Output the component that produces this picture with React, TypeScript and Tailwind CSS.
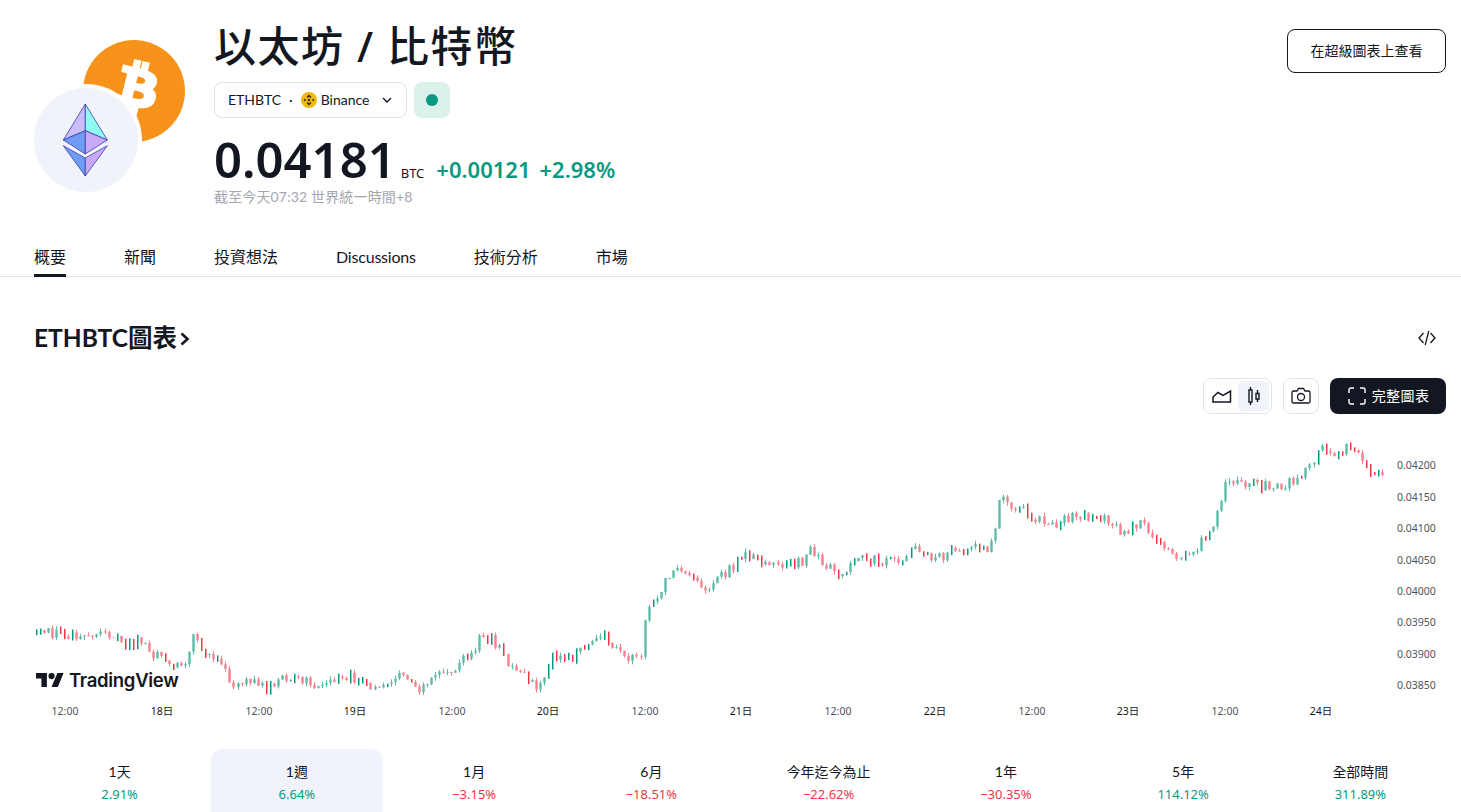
// close price path of the week as [x, y] in page pixels, read off the picture
const path: [number, number][] = [
  [35, 630], [40, 628], [45, 633], [60, 632], [75, 635], [95, 631], [110, 637], [125, 645], [140, 640],
  [155, 655], [165, 660], [180, 668], [186, 664], [193, 636], [205, 655], [220, 665], [232, 682], [245, 680],
  [265, 688], [280, 680], [305, 681], [310, 690], [325, 684], [350, 675], [365, 686], [385, 685], [400, 670],
  [420, 688], [440, 675], [470, 657], [480, 637], [492, 637], [505, 660], [520, 670], [535, 690], [545, 680],
  [553, 650], [560, 660], [575, 655], [605, 637], [620, 655], [640, 658], [645, 615], [655, 600], [670, 572],
  [680, 570], [705, 588], [730, 570], [745, 552], [775, 566], [805, 562], [809, 540], [820, 565], [840, 572],
  [860, 560], [900, 560], [918, 548], [935, 560], [960, 547], [990, 548], [1000, 500], [1020, 510], [1045, 525],
  [1075, 517], [1105, 520], [1120, 533], [1140, 525], [1160, 540], [1178, 562], [1195, 550], [1210, 530],
  [1225, 485], [1240, 482], [1260, 487], [1280, 485], [1300, 478], [1322, 445], [1327, 450], [1333, 458],
  [1345, 447], [1358, 452], [1365, 467], [1383, 478],
];

const yAt = (x: number) => {
  for (let i = 1; i < path.length; i++) {
    if (x <= path[i][0]) {
      const [x0, y0] = path[i - 1];
      const [x1, y1] = path[i];
      return y0 + ((x - x0) / (x1 - x0)) * (y1 - y0);
    }
  }
  return path[path.length - 1][1];
};

const rand = (n: number) => {
  const s = Math.sin(n * 127.1 + 11.7) * 43758.5453;
  return s - Math.floor(s);
};

const CHART_TOP = 425;
const NOISE = 11;

const candles = Array.from({ length: 335 }, (_, i) => {
  const x = 36 + i * 4.03;
  const close = yAt(x) + (rand(i) - 0.5) * NOISE;
  const open = yAt(x - 4.03) + (rand(i - 1) - 0.5) * NOISE;
  return {
    x: Math.round(x),
    top: Math.min(open, close) - rand(i + 500) * 3.5,
    bottom: Math.max(open, close) + rand(i + 900) * 3.5,
    bodyTop: Math.min(open, close),
    bodyH: Math.max(Math.abs(open - close), 1),
    up: close <= open,
    solid: rand(i + 1300) < 0.28,
  };
});

const prices = [
  ["0.04200", 465], ["0.04150", 497], ["0.04100", 528], ["0.04050", 560], ["0.04000", 591],
  ["0.03950", 622], ["0.03900", 654], ["0.03850", 685],
] as const;

const times = [
  ["12:00", 65], ["18日", 162], ["12:00", 259], ["19日", 355], ["12:00", 452], ["20日", 548], ["12:00", 645],
  ["21日", 741], ["12:00", 838], ["22日", 935], ["12:00", 1032], ["23日", 1128], ["12:00", 1225], ["24日", 1321],
] as const;

const periods = [
  { label: "1天", value: "2.91%", up: true },
  { label: "1週", value: "6.64%", up: true, active: true },
  { label: "1月", value: "−3.15%", up: false },
  { label: "6月", value: "−18.51%", up: false },
  { label: "今年迄今為止", value: "−22.62%", up: false },
  { label: "1年", value: "−30.35%", up: false },
  { label: "5年", value: "114.12%", up: true },
  { label: "全部時間", value: "311.89%", up: true },
];

const tabs = ["概要", "新聞", "投資想法", "Discussions", "技術分析", "市場"];

const CoinLogos = () => (
  <div className="relative h-[152px] w-[180px] shrink-0">
    <svg viewBox="0 0 102 102" className="absolute left-[49px] top-0 h-[102px] w-[102px]">
      <circle cx="51" cy="51" r="51" fill="#f7931a" />
      <g transform="translate(10.5 4.5) scale(2.68)">
        <path
          fill="#fff"
          stroke="#fff"
          strokeWidth="1"
          d="M23.189 14.02c.314-2.096-1.283-3.223-3.465-3.975l.708-2.84-1.728-.43-.69 2.765c-.454-.114-.92-.22-1.385-.326l.695-2.783L15.596 6l-.708 2.839c-.376-.086-.746-.17-1.104-.26l.002-.009-2.384-.595-.46 1.846s1.283.294 1.256.312c.7.175.826.638.805 1.006l-.806 3.235c.048.012.11.03.18.057l-.183-.045-1.13 4.532c-.086.212-.303.531-.793.41.018.025-1.256-.313-1.256-.313l-.858 1.978 2.25.561c.418.105.828.215 1.231.318l-.715 2.872 1.727.43.708-2.84c.472.127.93.245 1.378.357l-.706 2.828 1.728.43.715-2.866c2.948.558 5.164.333 6.097-2.333.752-2.146-.037-3.385-1.588-4.192 1.13-.26 1.98-1.003 2.207-2.538zm-3.95 5.538c-.533 2.147-4.148.986-5.32.695l.95-3.805c1.172.293 4.929.872 4.37 3.11zm.535-5.569c-.487 1.953-3.495.96-4.47.717l.86-3.45c.975.243 4.118.696 3.61 2.733z"
        />
      </g>
    </svg>
    <div className="absolute left-[-4px] top-[44px] h-[112px] w-[112px] rounded-full bg-white p-1">
      <div className="h-full w-full rounded-full bg-[#f0f3fa]">
        <svg viewBox="0 0 104 104" className="h-[104px] w-[104px]">
          <g stroke="#3c3ca8" strokeWidth="0.8" strokeLinejoin="round">
            <path d="M51.3 16 29.3 52 51.3 42.7Z" fill="#cabdf9" />
            <path d="M51.3 16 73.3 52 51.3 42.7Z" fill="#8ffcf0" />
            <path d="M29.3 52 51.3 42.7V66Z" fill="#6f9cf5" />
            <path d="M73.3 52 51.3 42.7V66Z" fill="#c9a8f5" />
            <path d="M29.3 57.7 51.3 70V88Z" fill="#6f9cf5" />
            <path d="M73.3 57.7 51.3 70V88Z" fill="#c9a8f5" />
          </g>
        </svg>
      </div>
    </div>
  </div>
);

const BinanceIcon = () => (
  <svg viewBox="0 0 16 16" className="h-4 w-4">
    <circle cx="8" cy="8" r="8" fill="#f0b90b" />
    <g fill="#2b2308">
      <path d="M8 2.6 10.400 5 9.400 6 8 4.600 6.600 6 5.600 5Z" />
      <path d="M8 13.400 10.400 11 9.400 10 8 11.400 6.600 10 5.600 11Z" />
      <path d="M2.600 8 3.800 6.800 5 8 3.800 9.200Z" />
      <path d="M13.400 8 12.200 6.800 11 8 12.200 9.200Z" />
      <path d="M8 6.500 9.500 8 8 9.500 6.500 8Z" />
    </g>
  </svg>
);

const Chart = () => (
  <svg width="1461" height="300" viewBox={`0 ${CHART_TOP} 1461 300`} className="block">
    {candles.map((c, i) =>
      c.solid ? (
        <rect
          key={i}
          x={c.x}
          y={c.top}
          width="1.5"
          height={c.bottom - c.top}
          fill={c.up ? "#089981" : "#f23645"}
        />
      ) : (
        <g key={i}>
          <rect
            x={c.x - 1}
            y={c.bodyTop}
            width="3"
            height={c.bodyH}
            fill={c.up ? "#8fd1c1" : "#fba5af"}
          />
          <rect
            x={c.x}
            y={c.top}
            width="1"
            height={c.bottom - c.top}
            fill={c.up ? "#5cbcaa" : "#f8808f"}
          />
        </g>
      ),
    )}
    {prices.map(([label, y]) => (
      <text key={label} x="1397" y={y + 4} fontSize="10.5" fill="#50535e" fontFamily="'Noto Sans', sans-serif">
        {label}
      </text>
    ))}
    {times.map(([label, x]) => (
      <text
        key={x}
        x={x}
        y="715"
        fontSize="10.5"
        textAnchor="middle"
        fill={label.includes("日") ? "#131722" : "#50535e"}
        fontFamily="'Noto Sans', 'Noto Sans CJK TC', sans-serif"
      >
        {label}
      </text>
    ))}
  </svg>
);

export default function App() {
  return (
    <div className="h-[812px] overflow-hidden bg-white font-['Lato','Noto_Sans_CJK_TC',sans-serif] text-[#131722]">
      <div className="flex justify-between pl-[34px] pr-[15px] pt-[18px]">
        <div className="flex">
          <div className="pt-[22px]">
            <CoinLogos />
          </div>
          <div>
            <h1 className="text-[42px] font-medium leading-[56px] tracking-[1.5px] font-['Noto_Sans','Noto_Sans_CJK_TC',sans-serif]">以太坊 / 比特幣</h1>
            <div className="mt-2 flex gap-[7px]">
              <div className="flex h-9 w-[193px] items-center rounded-lg border border-[#e0e3eb] pl-[13px] text-sm">
                <span>ETHBTC</span>
                <span className="mx-[8px]">·</span>
                <BinanceIcon />
                <span className="ml-1">Binance</span>
                <svg viewBox="0 0 12 12" className="ml-[11px] h-3 w-3" fill="none" stroke="#131722" strokeWidth="1.4">
                  <path d="M2 4 6 8 10 4" />
                </svg>
              </div>
              <div className="flex h-9 w-9 items-center justify-center rounded-lg bg-[#daf1ec]">
                <span className="h-3 w-3 rounded-full bg-[#089981]" />
              </div>
            </div>
            <div className="mt-[12px] flex items-baseline font-['Noto_Sans',sans-serif]">
              <span className="text-[49px] font-semibold leading-[58px]">0.04181</span>
              <span className="ml-[5px] text-[13px]">BTC</span>
              <span className="ml-[12px] text-[22px] font-semibold text-[#089981]">+0.00121</span>
              <span className="ml-[9px] text-[22px] font-semibold text-[#089981]">+2.98%</span>
            </div>
            <div className="-mt-px text-sm leading-5 tracking-[0.15px] text-[#a3a6af]">截至今天07:32 世界統一時間+8</div>
          </div>
        </div>
        <button className="mt-[11px] h-11 w-[159px] rounded-lg border border-[#131722] text-sm">在超級圖表上查看</button>
      </div>

      <div className="mt-[24px] flex gap-[58px] border-b border-[#e0e3eb] pl-[34px]">
        {tabs.map((t, i) => (
          <div
            key={t}
            className={`relative h-[45px] pt-[14px] text-base leading-6 text-[#131722] ${i === 3 ? "tracking-[-0.2px]" : ""}`}
          >
            {t}
            {i === 0 && <span className="absolute bottom-[-1px] left-0 h-[3px] w-full bg-[#131722]" />}
          </div>
        ))}
      </div>

      <div className="mt-[45px] flex items-center justify-between pl-[34px] pr-[24px]">
        <h2 className="flex items-center text-[24.5px] font-bold leading-8">
          ETHBTC圖表
          <svg viewBox="0 0 12 16" className="ml-[2px] mt-[2px] h-4 w-3" fill="none" stroke="#131722" strokeWidth="2.6">
            <path d="M2.5 2.5 8.5 8 2.5 13.5" />
          </svg>
        </h2>
        <svg viewBox="0 0 20 20" className="h-5 w-5" fill="none" stroke="#131722" strokeWidth="1.3">
          <path d="M6.5 5 2 10l4.5 5M13.5 5 18 10l-4.5 5M11.8 3 8.2 17" />
        </svg>
      </div>

      <div className="mt-[24px] flex justify-end gap-[11px] pr-[15px]">
        <div className="flex h-9 w-[69px] items-center rounded-lg border border-[#e0e3eb] p-[2px]">
          <div className="flex h-full w-[33px] items-center justify-center">
            <svg viewBox="0 0 20 14" className="h-[14px] w-5" fill="none" stroke="#131722" strokeWidth="1.5">
              <path d="M1 8 6 3.5l5 3 7.5-4.5V13H1Z" />
            </svg>
          </div>
          <div className="flex h-full w-[31px] items-center justify-center rounded-md bg-[#f0f3fa]">
            <svg viewBox="0 0 14 20" className="h-5 w-[14px]" fill="none" stroke="#131722" strokeWidth="1.4">
              <path d="M3.5 1v3M3.5 16v3M10.5 4v3.5M10.5 13v3M2 4h3v12H2ZM9 7.5h3V13H9Z" />
            </svg>
          </div>
        </div>
        <div className="flex h-9 w-9 items-center justify-center rounded-lg border border-[#e0e3eb]">
          <svg viewBox="0 0 20 18" className="h-[18px] w-5" fill="none" stroke="#131722" strokeWidth="1.3">
            <path d="M2.5 4H6l1.5-2.5h5L14 4h3.5A1.5 1.5 0 0 1 19 5.500v9a1.500 1.500 0 0 1-1.500 1.500h-15A1.500 1.500 0 0 1 1 14.500v-9A1.500 1.500 0 0 1 2.500 4Z" />
            <circle cx="10" cy="10" r="3.5" />
          </svg>
        </div>
        <button className="flex h-9 w-[116px] items-center justify-center gap-[6px] rounded-lg bg-[#131722] pl-px text-sm tracking-[0.4px] text-white">
          <svg viewBox="0 0 18 18" className="h-[18px] w-[18px]" fill="none" stroke="#fff" strokeWidth="1.4">
            <path d="M1 6V3a2 2 0 0 1 2-2h3M12 1h3a2 2 0 0 1 2 2v3M17 12v3a2 2 0 0 1-2 2h-3M6 17H3a2 2 0 0 1-2-2v-3" />
          </svg>
          完整圖表
        </button>
      </div>

      <div className="relative mt-[11px]">
        <Chart />
        <div className="absolute left-[36px] top-[244px] flex items-center gap-[5px]">
          <svg viewBox="0 4 36 18" className="h-[14px] w-[28px]" fill="#131722">
            <path d="M14 22H7V11H0V4h14v18ZM28 22h-8l7.5-18h8L28 22Z" />
            <circle cx="20" cy="8" r="4" />
          </svg>
          <span className="font-['Inter',sans-serif] text-[18.5px] font-semibold leading-[22px] tracking-[-0.3px]">TradingView</span>
        </div>
      </div>

      <div className="mt-[24px] grid grid-cols-8 gap-[6px] pl-[34px] pr-[15px]">
        {periods.map((p) => (
          <div
            key={p.label}
            className={`flex h-[70px] flex-col items-center rounded-t-xl pt-[13px] leading-5 ${p.active ? "bg-[#f0f3fa]" : ""}`}
          >
            <span className="text-sm">{p.label}</span>
            <span className={`mt-[2px] font-['Noto_Sans',sans-serif] text-[13px] ${p.up ? "text-[#089981]" : "text-[#f23645]"}`}>{p.value}</span>
          </div>
        ))}
      </div>
    </div>
  );
}
